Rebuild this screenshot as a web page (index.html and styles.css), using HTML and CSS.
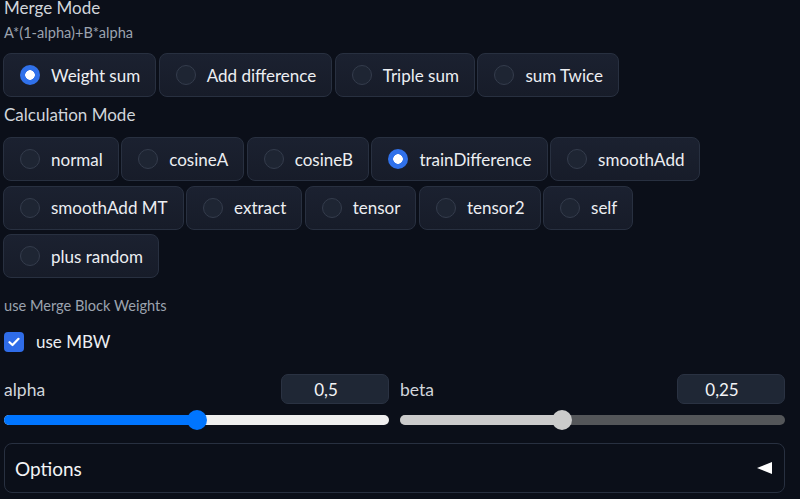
FILE: index.html
```html
<!DOCTYPE html>
<html>
<head>
<meta charset="utf-8">
<link rel="stylesheet" href="styles.css">
</head>
<body>
<div class="page">
  <div class="block-title">Merge Mode</div>
  <div class="info">A*(1-alpha)+B*alpha</div>
  <div class="radio-group first">
    <label class="radio selected"><span class="dot"></span><span>Weight sum</span></label>
    <label class="radio"><span class="dot"></span><span>Add difference</span></label>
    <label class="radio"><span class="dot"></span><span>Triple sum</span></label>
    <label class="radio"><span class="dot"></span><span>sum Twice</span></label>
  </div>
  <div class="block-title second">Calculation Mode</div>
  <div class="radio-group calc">
    <label class="radio"><span class="dot"></span><span>normal</span></label>
    <label class="radio"><span class="dot"></span><span>cosineA</span></label>
    <label class="radio"><span class="dot"></span><span>cosineB</span></label>
    <label class="radio selected"><span class="dot"></span><span>trainDifference</span></label>
    <label class="radio"><span class="dot"></span><span>smoothAdd</span></label>
    <label class="radio"><span class="dot"></span><span>smoothAdd MT</span></label>
    <label class="radio"><span class="dot"></span><span>extract</span></label>
    <label class="radio"><span class="dot"></span><span>tensor</span></label>
    <label class="radio"><span class="dot"></span><span>tensor2</span></label>
    <label class="radio"><span class="dot"></span><span>self</span></label>
    <label class="radio"><span class="dot"></span><span>plus random</span></label>
  </div>
  <div class="info mbw-info">use Merge Block Weights</div>
  <label class="checkbox-row">
    <span class="checkbox"><svg width="12" height="10" viewBox="0 0 12 10"><path d="M1.5 5.2 L4.5 8 L10.5 1.8" fill="none" stroke="#fff" stroke-width="2.2" stroke-linecap="round" stroke-linejoin="round"/></svg></span>
    <span>use MBW</span>
  </label>
  <div class="sliders">
    <div class="slider">
      <div class="slider-head">
        <span class="slider-label">alpha</span>
        <span class="num">0,5</span>
      </div>
      <div class="track blue">
        <div class="fill" style="width: 50%"></div>
        <div class="thumb" style="left: 50%"></div>
      </div>
    </div>
    <div class="slider">
      <div class="slider-head">
        <span class="slider-label">beta</span>
        <span class="num">0,25</span>
      </div>
      <div class="track grey">
        <div class="fill" style="width: 42%"></div>
        <div class="thumb" style="left: 42%"></div>
      </div>
    </div>
  </div>
  <div class="accordion">
    <span class="acc-title">Options</span>
    <span class="acc-icon"></span>
  </div>
</div>
</body>
</html>
```

FILE: styles.css
```css
html, body {
  margin: 0;
  padding: 0;
  background: #0b0f19;
  height: 100%;
  overflow: hidden;
}
body {
  font-family: Lato, "Liberation Sans", sans-serif;
  color: #e5e7eb;
}
.page {
  width: 782px;
  padding-left: 3px;
}
.block-title {
  font-size: 17px;
  line-height: 16px;
  color: #d1d5db;
  padding-left: 1px;
}
.block-title.second {
  margin-top: 8px;
  line-height: 20px;
}
.info {
  font-size: 14.6px;
  line-height: 20px;
  color: #9ca3af;
  margin-top: 7px;
  padding-left: 1px;
}
.radio-group {
  display: flex;
  flex-wrap: wrap;
  gap: 4.5px 2.5px;
}
.radio-group.first {
  margin-top: 10px;
}
.radio-group.calc {
  margin-top: 12px;
}
.radio {
  display: flex;
  align-items: center;
  gap: 11px;
  height: 44px;
  box-sizing: border-box;
  padding: 0 15px 0 16px;
  border: 1px solid #283040;
  border-radius: 8px;
  background: linear-gradient(to bottom, #1b2130, #171c29);
  font-size: 17px;
  color: #eceef2;
}
.dot {
  width: 20px;
  height: 20px;
  box-sizing: border-box;
  border-radius: 50%;
  border: 1px solid #343c4c;
  background: #1e2533;
  flex: none;
}
.radio.selected .dot {
  border: none;
  background: radial-gradient(circle, #ffffff 0, #ffffff 4.5px, #3071ea 5px);
}
.mbw-info {
  margin-top: 18px;
}
.checkbox-row {
  display: flex;
  align-items: center;
  gap: 12px;
  margin-top: 15px;
  padding-left: 1px;
  font-size: 17px;
  color: #eceef2;
}
.checkbox {
  width: 20px;
  height: 20px;
  border-radius: 4px;
  background: #2f6ce8;
  display: flex;
  align-items: center;
  justify-content: center;
}
.sliders {
  display: flex;
  gap: 11px;
  margin-top: 22px;
  padding-left: 1px;
}
.slider {
  flex: 1;
}
.slider-head {
  display: flex;
  justify-content: space-between;
  align-items: center;
  height: 30px;
}
.slider-label {
  font-size: 17.5px;
  color: #d1d5db;
}
.num {
  width: 108px;
  height: 30px;
  box-sizing: border-box;
  border-radius: 7px;
  background: #1f2735;
  border: 1px solid #2a3242;
  font-size: 17px;
  color: #f3f4f6;
  display: flex;
  align-items: center;
  justify-content: center;
  padding-right: 18px;
}
.track {
  position: relative;
  height: 10px;
  border-radius: 5px;
  margin-top: 11px;
}
.track .fill {
  height: 100%;
  border-radius: 5px;
}
.track .thumb {
  position: absolute;
  top: -5px;
  width: 20px;
  height: 20px;
  margin-left: -10px;
  border-radius: 50%;
}
.track.blue { background: #efefef; }
.track.blue .fill, .track.blue .thumb { background: #0075ff; }
.track.grey { background: #545659; }
.track.grey .fill, .track.grey .thumb { background: #cbcbcb; }
.accordion {
  margin-top: 18px;
  margin-left: 1px;
  height: 50px;
  box-sizing: border-box;
  border: 1px solid #283040;
  border-radius: 8px;
  display: flex;
  align-items: center;
  justify-content: space-between;
  padding: 0 12px 0 10px;
}
.acc-title {
  font-size: 19px;
  color: #f3f4f6;
}
.acc-icon {
  width: 0;
  height: 0;
  border-top: 6.5px solid transparent;
  border-bottom: 6.5px solid transparent;
  border-right: 15px solid #ffffff;
}
```
